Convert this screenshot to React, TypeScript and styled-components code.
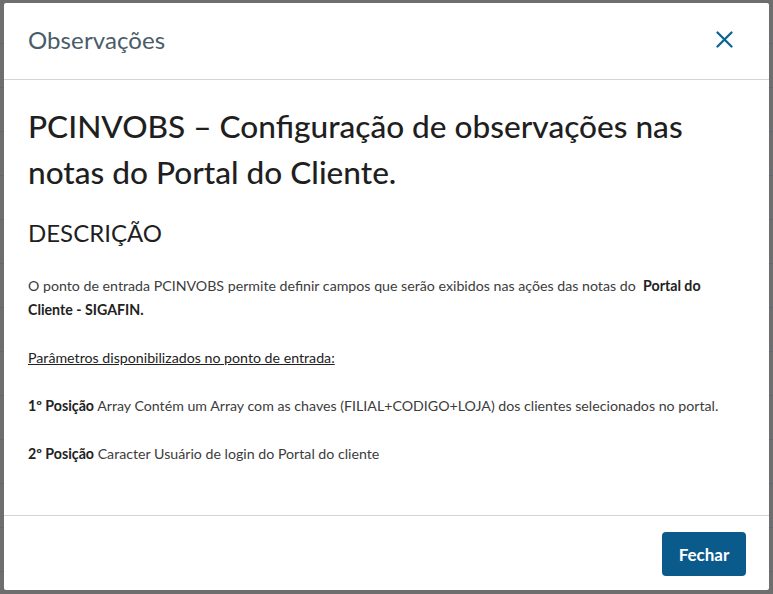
import React from "react";
import styled, { createGlobalStyle } from "styled-components";

const GlobalStyle = createGlobalStyle`
  html, body {
    margin: 0;
    padding: 0;
  }
  body {
    background-color: #6e6e6e;
    background-image: repeating-linear-gradient(
      to bottom,
      transparent 0px,
      transparent 43px,
      #5d6873 43px,
      #5d6873 44px
    );
    font-family: "Lato", "Noto Sans", sans-serif;
  }
  * { box-sizing: border-box; }
`;

const Overlay = styled.div`
  width: 773px;
  height: 594px;
  padding: 3px 4px 4px 4px;
  display: flex;
`;

const Modal = styled.div`
  flex: 1;
  background: #ffffff;
  border-radius: 2px;
  display: flex;
  flex-direction: column;
  overflow: hidden;
`;

const Header = styled.header`
  height: 77px;
  flex: none;
  display: flex;
  align-items: center;
  justify-content: space-between;
  padding: 0 24px 3px 24px;
  border-bottom: 1px solid #d4d4d4;
`;

const HeaderTitle = styled.h2`
  margin: 0;
  font-size: 24px;
  font-weight: 400;
  color: #4a5c69;
  letter-spacing: 0.1px;
`;

const CloseButton = styled.button`
  border: none;
  background: transparent;
  padding: 0;
  width: 24px;
  height: 24px;
  display: flex;
  align-items: center;
  justify-content: center;
  margin-right: 9px;
  cursor: pointer;
`;

const Body = styled.main`
  flex: 1;
  padding: 23px 24px 0 24px;
  color: #3a3a3a;
`;

const Title = styled.h1`
  margin: 0;
  font-size: 31.6px;
  line-height: 46px;
  font-weight: 500;
  color: #1f1f1f;
`;

const Section = styled.h3`
  margin: 20px 0 23px 0;
  font-size: 24px;
  line-height: 36px;
  font-weight: 400;
  color: #1f1f1f;
`;

const Paragraph = styled.p`
  margin: 0 0 24px 0;
  font-size: 14.2px;
  line-height: 24px;
  color: #3c3c3c;
`;

const Strong = styled.strong`
  font-weight: 700;
  color: #222222;
`;

const Underlined = styled.span`
  text-decoration: underline;
  color: #222222;
`;

const Footer = styled.footer`
  flex: none;
  height: 75px;
  border-top: 1px solid #d4d4d4;
  display: flex;
  align-items: flex-start;
  justify-content: flex-end;
  padding: 16px 23px 0 0;
`;

const PrimaryButton = styled.button`
  width: 84px;
  height: 44px;
  border: none;
  border-radius: 4px;
  background: #0b5a8c;
  color: #ffffff;
  font-family: "Lato", "Noto Sans", sans-serif;
  font-size: 17px;
  font-weight: 700;
  cursor: pointer;
`;

export default function App() {
  return (
    <>
      <GlobalStyle />
      <Overlay>
        <Modal>
          <Header>
            <HeaderTitle>Observações</HeaderTitle>
            <CloseButton aria-label="Fechar">
              <svg width="17" height="17" viewBox="0 0 17 17" fill="none">
                <path
                  d="M1.5 1.5 L15.5 15.5 M15.5 1.5 L1.5 15.5"
                  stroke="#0c6592"
                  strokeWidth="2.3"
                  strokeLinecap="round"
                />
              </svg>
            </CloseButton>
          </Header>
          <Body>
            <Title>
              PCINVOBS – Configuração de observações nas notas do Portal do
              Cliente.
            </Title>
            <Section>DESCRIÇÃO</Section>
            <Paragraph>
              O ponto de entrada PCINVOBS permite definir campos que serão
              exibidos nas ações das notas do&nbsp; <Strong>Portal do Cliente - SIGAFIN.</Strong>
            </Paragraph>
            <Paragraph>
              <Underlined>Parâmetros disponibilizados no ponto de entrada:</Underlined>
            </Paragraph>
            <Paragraph>
              <Strong>1º Posição</Strong> Array Contém um Array com as chaves
              (FILIAL+CODIGO+LOJA) dos clientes selecionados no portal.
            </Paragraph>
            <Paragraph>
              <Strong>2º Posição</Strong> Caracter Usuário de login do Portal do
              cliente
            </Paragraph>
          </Body>
          <Footer>
            <PrimaryButton>Fechar</PrimaryButton>
          </Footer>
        </Modal>
      </Overlay>
    </>
  );
}
